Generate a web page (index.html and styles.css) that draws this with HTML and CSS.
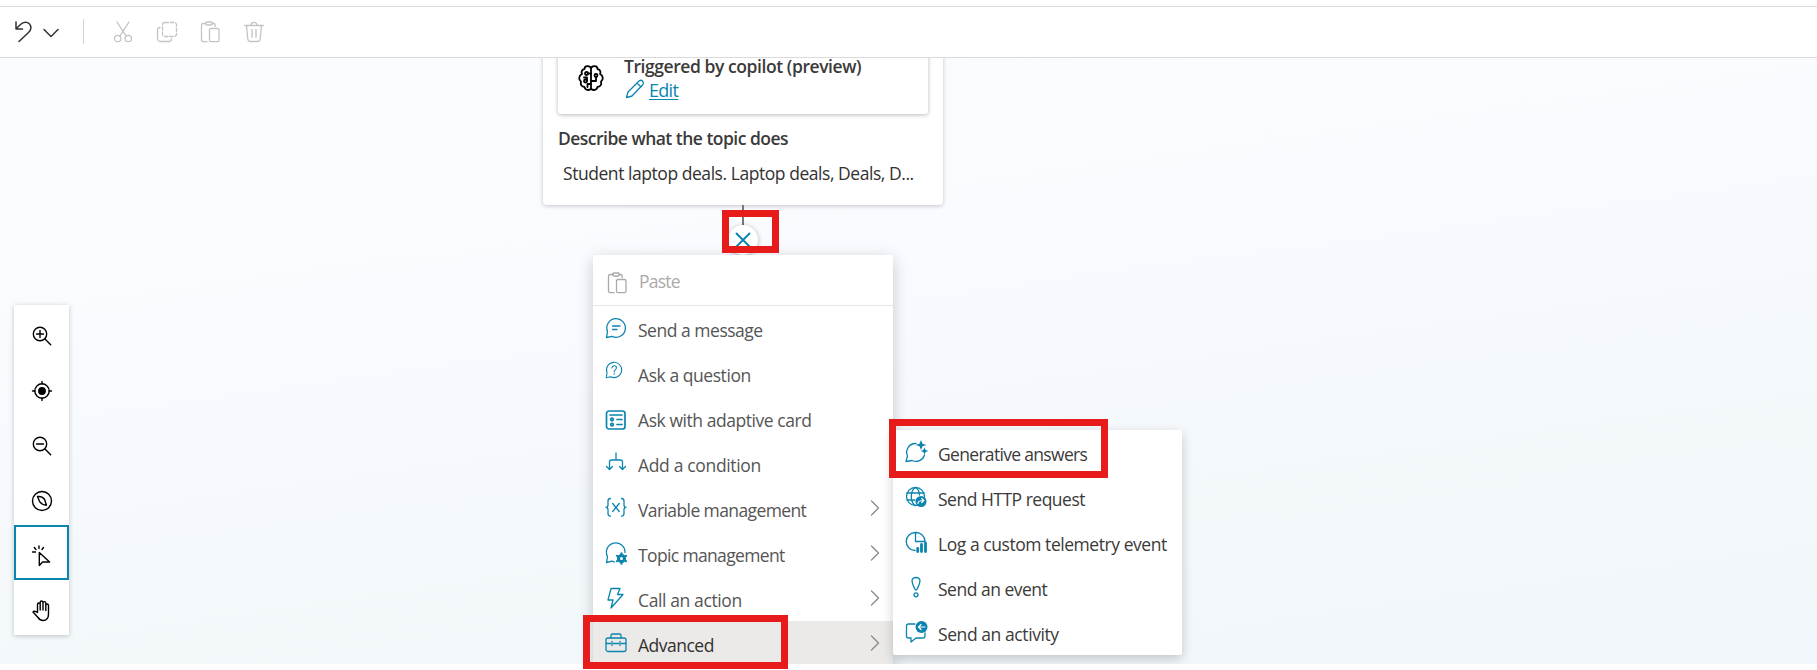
FILE: index.html
```
<!DOCTYPE html>
<html lang="en">
<head>
<meta charset="utf-8">
<title>Topic authoring canvas</title>
<link rel="stylesheet" href="styles.css">
</head>
<body>
<svg class="defs" width="0" height="0" aria-hidden="true">
  <symbol id="paste" viewBox="0 0 20 22"><path d="M6 2.5H3.2Q1.5 2.5 1.5 4.2V19Q1.5 20.7 3.2 20.7H7M12 2.5h1.5q1.7 0 1.7 1.7V5.500"/><rect x="5.5" y="1" width="7" height="3" rx="1.500"/><rect x="9.500" y="7.500" width="9.500" height="13.200" rx="1.500"/></symbol>
  <symbol id="chev" viewBox="0 0 10 16"><path d="M1.500 1l7 7-7 7"/></symbol>
</svg>
<header class="toolbar">
  <button class="tool dark undo"><svg width="20" height="22" viewBox="0 0 20 22"><path d="M2 1v7h6.500M2.300 7.500L6.500 3.500C9.500 .5 13.500 .8 15.500 3s2 6-1 8.500L5 20.500"/></svg></button>
  <button class="tool dark caret"><svg width="16" height="10" viewBox="0 0 16 10"><path d="M1 1.500l7 7 7-7"/></svg></button>
  <span class="divider"></span>
  <button class="tool cut"><svg width="20" height="22" viewBox="0 0 20 22"><path d="M4 1l9.300 14.300M16 1L6.700 15.300"/><circle cx="4.700" cy="17.500" r="3.200"/><circle cx="15.300" cy="17.500" r="3.200"/></svg></button>
  <button class="tool copy"><svg width="22" height="22" viewBox="0 0 22 22"><rect x="6.500" y="1.500" width="14" height="14" rx="2.500" stroke-dasharray="3.500 1.800"/><path d="M4 6.500q-2.500 0-2.500 3V17q0 3.500 3.500 3.500h7.500q3 0 3-2.500"/></svg></button>
  <button class="tool pst"><svg width="20" height="22"><use href="#paste"/></svg></button>
  <button class="tool bin"><svg width="20" height="22" viewBox="0 0 20 22"><path d="M.7 4.500h18.600M7 4.300C7 .5 13 .5 13 4.300M2.500 4.500l1.300 13.500q.3 2.500 2.500 2.500h7.400q2.200 0 2.500-2.500L17.500 4.500M8 8.500v8M12 8.500v8"/></svg></button>
</header>

<main class="canvas">
  <section class="trigger">
    <div class="trigger-head">
      <svg class="brain" width="26" height="26" viewBox="0 0 26 26"><path d="M13 3.500C12 0 6.500.5 6.500 4 3.500 4.500 3 7.500 4 9 .5 10.500.5 15 3 16.500 2 20 4 22 6.500 22 7.500 26 12 25.500 13 23.500ZM13 3.500C14 0 19.500.5 19.500 4c3 .5 3.500 3.500 2.500 5 3.500 1.500 3.500 6 1 7.500 1 3.500-1 5.500-3.500 5.500-1 4-5.500 3.500-6.500 1.500"/><circle cx="8.500" cy="8.500" r="1.500"/><circle cx="7.500" cy="16" r="1.500"/><circle cx="18" cy="10.500" r="1.500"/><path d="M10 8.500h3M9 16V12.500H6M9.500 22v-3H13M18 12v4h-5"/></svg>
      <div>
        <h2 class="trigger-title">Triggered by copilot (preview)</h2>
        <div class="edit"><svg width="20" height="20" viewBox="0 0 20 20"><path d="M1.500 18.500l1.500-5.500L14 2q2-1.500 3.500 0t.5 3.500L7 17zM12 4l4 4"/></svg><a href="#">Edit</a></div>
      </div>
    </div>
    <h3 class="describe">Describe what the topic does</h3>
    <p class="summary">Student laptop deals. Laptop deals, Deals, D...</p>
  </section>
  <span class="wire"></span>
  <button class="close"><svg width="16" height="16" viewBox="0 0 16 16"><path d="M1.500 1.500l13 13M14.500 1.500l-13 13"/></svg></button>

  <nav class="menu">
    <div class="item paste"><svg class="ico" width="20" height="22"><use href="#paste"/></svg><span class="t0">Paste</span></div>
    <div class="item"><svg class="ico" viewBox="0 0 22 22"><path d="M1.500 20.500l1-6A9.300 9.300 0 1 1 7 19.300zM7.500 9H15M7.500 12.500h4.500"/></svg><span class="t1">Send a message</span></div>
    <div class="item"><svg class="ico small" viewBox="0 0 22 22"><path d="M1.500 20.500l1-6A9.300 9.300 0 1 1 7 19.300zM8.500 8.500c0-3.500 5.500-3.500 5.500 0 0 2-2.800 2.300-2.800 4.500M11.200 15v1"/></svg><span class="t2">Ask a question</span></div>
    <div class="item"><svg class="ico bold" viewBox="0 0 22 22"><rect x="1.500" y="2" width="18.500" height="18" rx="2.500"/><path d="M5 6h12M12 10.500h5M12 15.500h5"/><circle cx="7" cy="10.500" r="1.300"/><circle cx="7" cy="15.700" r="1.300"/></svg><span class="t3">Ask with adaptive card</span></div>
    <div class="item"><svg class="ico" viewBox="0 0 22 22"><path d="M11 1v7M4.500 17V10q0-2 2-2h9q2 0 2 2v7M1.500 14.500l3 3 3-3M14.500 14.500l3 3 3-3"/></svg><span class="t4">Add a condition</span></div>
    <div class="item"><svg class="ico" viewBox="0 0 22 22"><path d="M5.500 1.500q-2.500 0-2.500 2.500v4q0 2.300-2 2.300 2 0 2 2.300v4q0 2.500 2.500 2.500M16.500 1.500q2.500 0 2.500 2.500v4q0 2.300 2 2.300-2 0-2 2.300v4q0 2.500-2.500 2.500M7.700 6.500l6.500 8M14.200 6.500l-6.500 8"/></svg><span class="t5">Variable management</span><svg class="chev" width="10" height="16"><use href="#chev"/></svg></div>
    <div class="item"><svg class="ico" viewBox="0 0 22 22"><path d="M9.500 20L7 19.200l-5.500 1.300 1-6A9.300 9.300 0 1 1 20 10.500"/><circle cx="16.500" cy="16.500" r="3" stroke-width="3"/><path stroke-width="2.200" d="M16.500 11.300v10.400M12 13.900l9 5.200M12 19.100l9-5.200"/><circle cx="16.500" cy="16.500" r="1.500" fill="#fff" stroke="none"/></svg><span class="t6">Topic management</span><svg class="chev" width="10" height="16"><use href="#chev"/></svg></div>
    <div class="item"><svg class="ico" viewBox="0 0 22 22"><path d="M6 1.500h9L12.500 7.500H18L6 21l2-8H3z"/></svg><span class="t7">Call an action</span><svg class="chev" width="10" height="16"><use href="#chev"/></svg></div>
    <div class="item active"><svg class="ico" viewBox="0 0 22 22"><rect x="1" y="6" width="20" height="13.500" rx="2"/><path d="M6 6V3.500q0-1.500 1.500-1.500h7Q16 2 16 3.500V6M1 11.500h4.500m3 0h5m3 0H21M7 9.500v4M15 9.500v4"/></svg><span class="t8">Advanced</span><svg class="chev" width="10" height="16"><use href="#chev"/></svg></div>
  </nav>

  <nav class="submenu">
    <div class="item"><svg class="ico" viewBox="0 0 22 22"><path d="M11 2.500A8.800 8.800 0 0 0 2.500 15L1 20.500l6-1A9 9 0 0 0 19.500 14"/><path class="fill" d="M16 -1l1.500 3.800L21.500 4 17.500 5.200 16 9l-1.500-3.800L10.500 4l4-1.200zM19.500 6.500l1.200 2.600 2.600.9-2.600.9-1.200 2.600-1.200-2.600-2.600-.9 2.600-.9z"/></svg><span class="s1">Generative answers</span></div>
    <div class="item"><svg class="ico" viewBox="0 0 22 22"><circle cx="10.500" cy="10.500" r="9"/><path d="M2 7h17M2 14h8M10 19.500C4.500 15 5.500 4 10.500 1.500 13 3 14.500 6 14.500 9"/><circle class="fill" cx="16" cy="15.500" r="5.500"/><path class="white" d="M13 17.500q0-3 5.500-3M16.800 12.500l2 2-2 2"/></svg><span class="s2">Send HTTP request</span></div>
    <div class="item"><svg class="ico" viewBox="0 0 22 22"><path d="M10.500 1.500v9H20M10.500 1.500A9 9 0 1 0 10 19.500M10.500 1.500A9 9 0 0 1 20 10.500"/><path stroke-width="2.800" d="M12.700 20.500v-3.200M16.500 20.500v-7M20.500 20.500V12"/></svg><span class="s3">Log a custom telemetry event</span></div>
    <div class="item"><svg class="ico" viewBox="0 0 22 22"><path d="M11 14C9.500 14 7 6.500 7 4.500Q7.500 1.500 11 1.500t4 3C15 6.500 12.500 14 11 14z"/><circle cx="11" cy="18.800" r="2"/></svg><span class="s4">Send an event</span></div>
    <div class="item"><svg class="ico" viewBox="0 0 22 22"><path d="M10 3H3.500Q1.500 3 1.500 5v10q0 2 2 2H6v4l5-4h7q2 0 2-2v-3"/><circle class="fill" cx="16.500" cy="6" r="6"/><path class="white" d="M20 6h-6.500M16 3.500L13.500 6 16 8.500"/></svg><span class="s5">Send an activity</span></div>
  </nav>

  <aside class="side">
    <button class="view"><svg viewBox="0 0 22 22"><circle cx="9" cy="9" r="6.700"/><path d="M14 14l5.700 5.700M5.500 9h7M9 5.500v7"/></svg></button>
    <button class="view"><svg viewBox="0 0 22 22"><circle cx="11" cy="11" r="7.200"/><circle cx="11" cy="11" r="3.200" fill="#000"/><path d="M11 1.500v2.500M11 18v2.500M1.500 11h2.500M18 11h2.500"/></svg></button>
    <button class="view"><svg viewBox="0 0 22 22"><circle cx="9" cy="9" r="6.700"/><path d="M14 14l5.700 5.700M5.500 9h7"/></svg></button>
    <button class="view"><svg viewBox="0 0 22 22"><circle cx="11" cy="11" r="9.500"/><path d="M6.500 6.500q4.500-.5 7 2.700l2 6q-4.500-.3-6.700-3.300z"/></svg></button>
    <button class="view on"><svg viewBox="0 0 22 22"><path d="M8.300 7.500v13l3.300-3.500h7zM8 1v2.500M3.300 2.500l1.700 2M12.500 2.500L11 4.500M1.500 7H4.500"/></svg></button>
    <button class="view"><svg viewBox="0 0 22 22"><path d="M6.500 12.500V4.500q0-1.500 1.300-1.500t1.400 1.500V10 2.500Q9.200 1 10.500 1T12 2.500V10 3q0-1.400 1.300-1.400T14.800 3v7.500-5Q15 4 16.200 4t1.300 1.500V14q0 6.500-5.500 6.500-3 0-5-3L2 12q1-1.700 4.500.5z"/></svg></button>
  </aside>
</main>
<div class="mark mark-close"></div>
<div class="mark mark-advanced"></div>
<div class="mark mark-answers"></div>
</body>
</html>
```
FILE: styles.css
```
* { box-sizing: border-box; }
body { margin: 0; height: 670px; overflow: hidden; background: #fff; position: relative; padding-top: 6px; font-family: "Open Sans", "Noto Sans", sans-serif; color: #323130; }
button { border: 0; padding: 0; background: none; }
svg { display: block; fill: none; stroke: currentColor; stroke-width: 1.3; stroke-linejoin: round; stroke-linecap: round; flex: none; overflow: visible; }
.defs { position: absolute; }
.toolbar { height: 52px; border-top: 1px solid #dcdcdc; border-bottom: 1px solid #dadada; display: flex; align-items: center; padding: 0 0 1px 14px; }
.tool { color: #c4c4c4; }
.tool.dark { color: #333; }
.tool.dark svg { stroke-width: 1.5; }
.caret { margin: 2px 0 0 9px; }
.divider { width: 1px; height: 25px; background: #d5d5d5; margin: 0 29px 0 24px; }
.copy { margin-left: 23px; }
.pst { margin-left: 22px; }
.bin { margin-left: 24px; }
.canvas { position: relative; height: 606px; overflow: hidden; background: linear-gradient(172deg, #fbfcff 0%, #f9fbff 30%, #f3f8fb 72%, #f1f6fa 100%); }

.trigger { position: absolute; left: 543px; top: -20px; width: 400px; height: 167px; background: #fff; border-radius: 4px; padding: 0 15px; box-shadow: 0 1px 4px rgba(0,0,0,.22); }
.trigger-head { height: 76px; border-radius: 0 0 3px 3px; display: flex; padding: 16px 0 0 20px; gap: 20px; box-shadow: 0 1px 4px rgba(0,0,0,.28); }
.brain { color: #000; stroke-width: 1.8; margin-top: 11px; }
.trigger-title, .describe { margin: 0; font-size: 17.500px; font-weight: 600; line-height: 24px; white-space: nowrap; color: #3b3a39; }
.trigger-title { letter-spacing: -.43px; }
.edit { display: flex; gap: 4px; color: #0b84ae; font-size: 18px; line-height: 26px; padding-left: 1px; margin-top: -1px; }
.edit svg { margin-top: 2px; }
.edit a { color: inherit; letter-spacing: -.7px; text-underline-offset: 2px; }
.describe { margin-top: 12px; letter-spacing: -.52px; }
.summary { margin: 11px 0 0 5px; font-size: 17.500px; line-height: 24px; white-space: nowrap; letter-spacing: -.45px; }
.wire { position: absolute; left: 742px; top: 147px; width: 2px; height: 22px; background: #777; }
.close { position: absolute; left: 728px; top: 167px; width: 30px; height: 30px; border-radius: 50%; background: #fff; color: #0b84ae; display: grid; place-items: center; box-shadow: 0 1px 5px rgba(0,0,0,.3); }
.close svg { stroke-width: 1.9; }

.menu, .submenu { position: absolute; background: #fff; font-size: 17.500px; white-space: nowrap; }
.menu { left: 593px; top: 197px; width: 300px; height: 420px; color: #555; border-radius: 2px; box-shadow: 0 4px 16px rgba(0,0,0,.2); }
.submenu { left: 893px; top: 372px; width: 289px; height: 225px; color: #3b3a39; border-radius: 2px; box-shadow: 0 4px 12px rgba(0,0,0,.2); }
.item { height: 45px; display: flex; align-items: center; padding: 2px 13px 0 12px; gap: 11px; }
.ico { width: 22px; height: 22px; color: #0b84ae; margin-top: -3px; }
.ico.small { width: 18px; height: 18px; margin: -9px 4px 0 0; }
.ico.bold { stroke-width: 1.7; margin-top: 0; }
.fill { fill: #0b84ae; stroke: none; }
.white { stroke: #fff; stroke-width: 1.2; }
.paste { height: 51px; border-bottom: 1px solid #e5e5e5; color: #aaa; padding: 1px 13px 0; }
.paste .ico { width: 20px; color: #aaa; margin: 4px 1px 0 1px; }
.chev { margin-left: auto; margin-top: -3px; color: #8a8a8a; }
.active { background: #ebeae9; color: #323130; }
.t0 { letter-spacing: -.75px; }
.t1 { letter-spacing: -.48px; }
.t2 { letter-spacing: -.44px; }
.t3 { letter-spacing: -.44px; }
.t4 { letter-spacing: -.34px; }
.t5 { letter-spacing: -.6px; }
.t6 { letter-spacing: -.64px; }
.t7 { letter-spacing: -.38px; }
.t8 { letter-spacing: -.5px; }
.s1 { letter-spacing: -.68px; }
.s2 { letter-spacing: -.5px; }
.s3 { letter-spacing: -.45px; }
.s4 { letter-spacing: -.5px; }
.s5 { letter-spacing: -.42px; }

.side { position: absolute; left: 14px; top: 247px; width: 55px; background: #fff; box-shadow: 0 1px 5px rgba(0,0,0,.22); }
.view { width: 55px; height: 55px; display: grid; place-items: center; color: #000; padding-top: 6px; }
.view svg { width: 22px; height: 22px; stroke-width: 1.4; }
.view.on { border: 2px solid #0b84ae; }

.mark { position: absolute; border: 7px solid #e81b1b; }
.mark-close { left: 722px; top: 210px; width: 57px; height: 43px; }
.mark-advanced { left: 583px; top: 615px; width: 205px; height: 54px; }
.mark-answers { left: 889px; top: 419px; width: 219px; height: 59px; }
```
